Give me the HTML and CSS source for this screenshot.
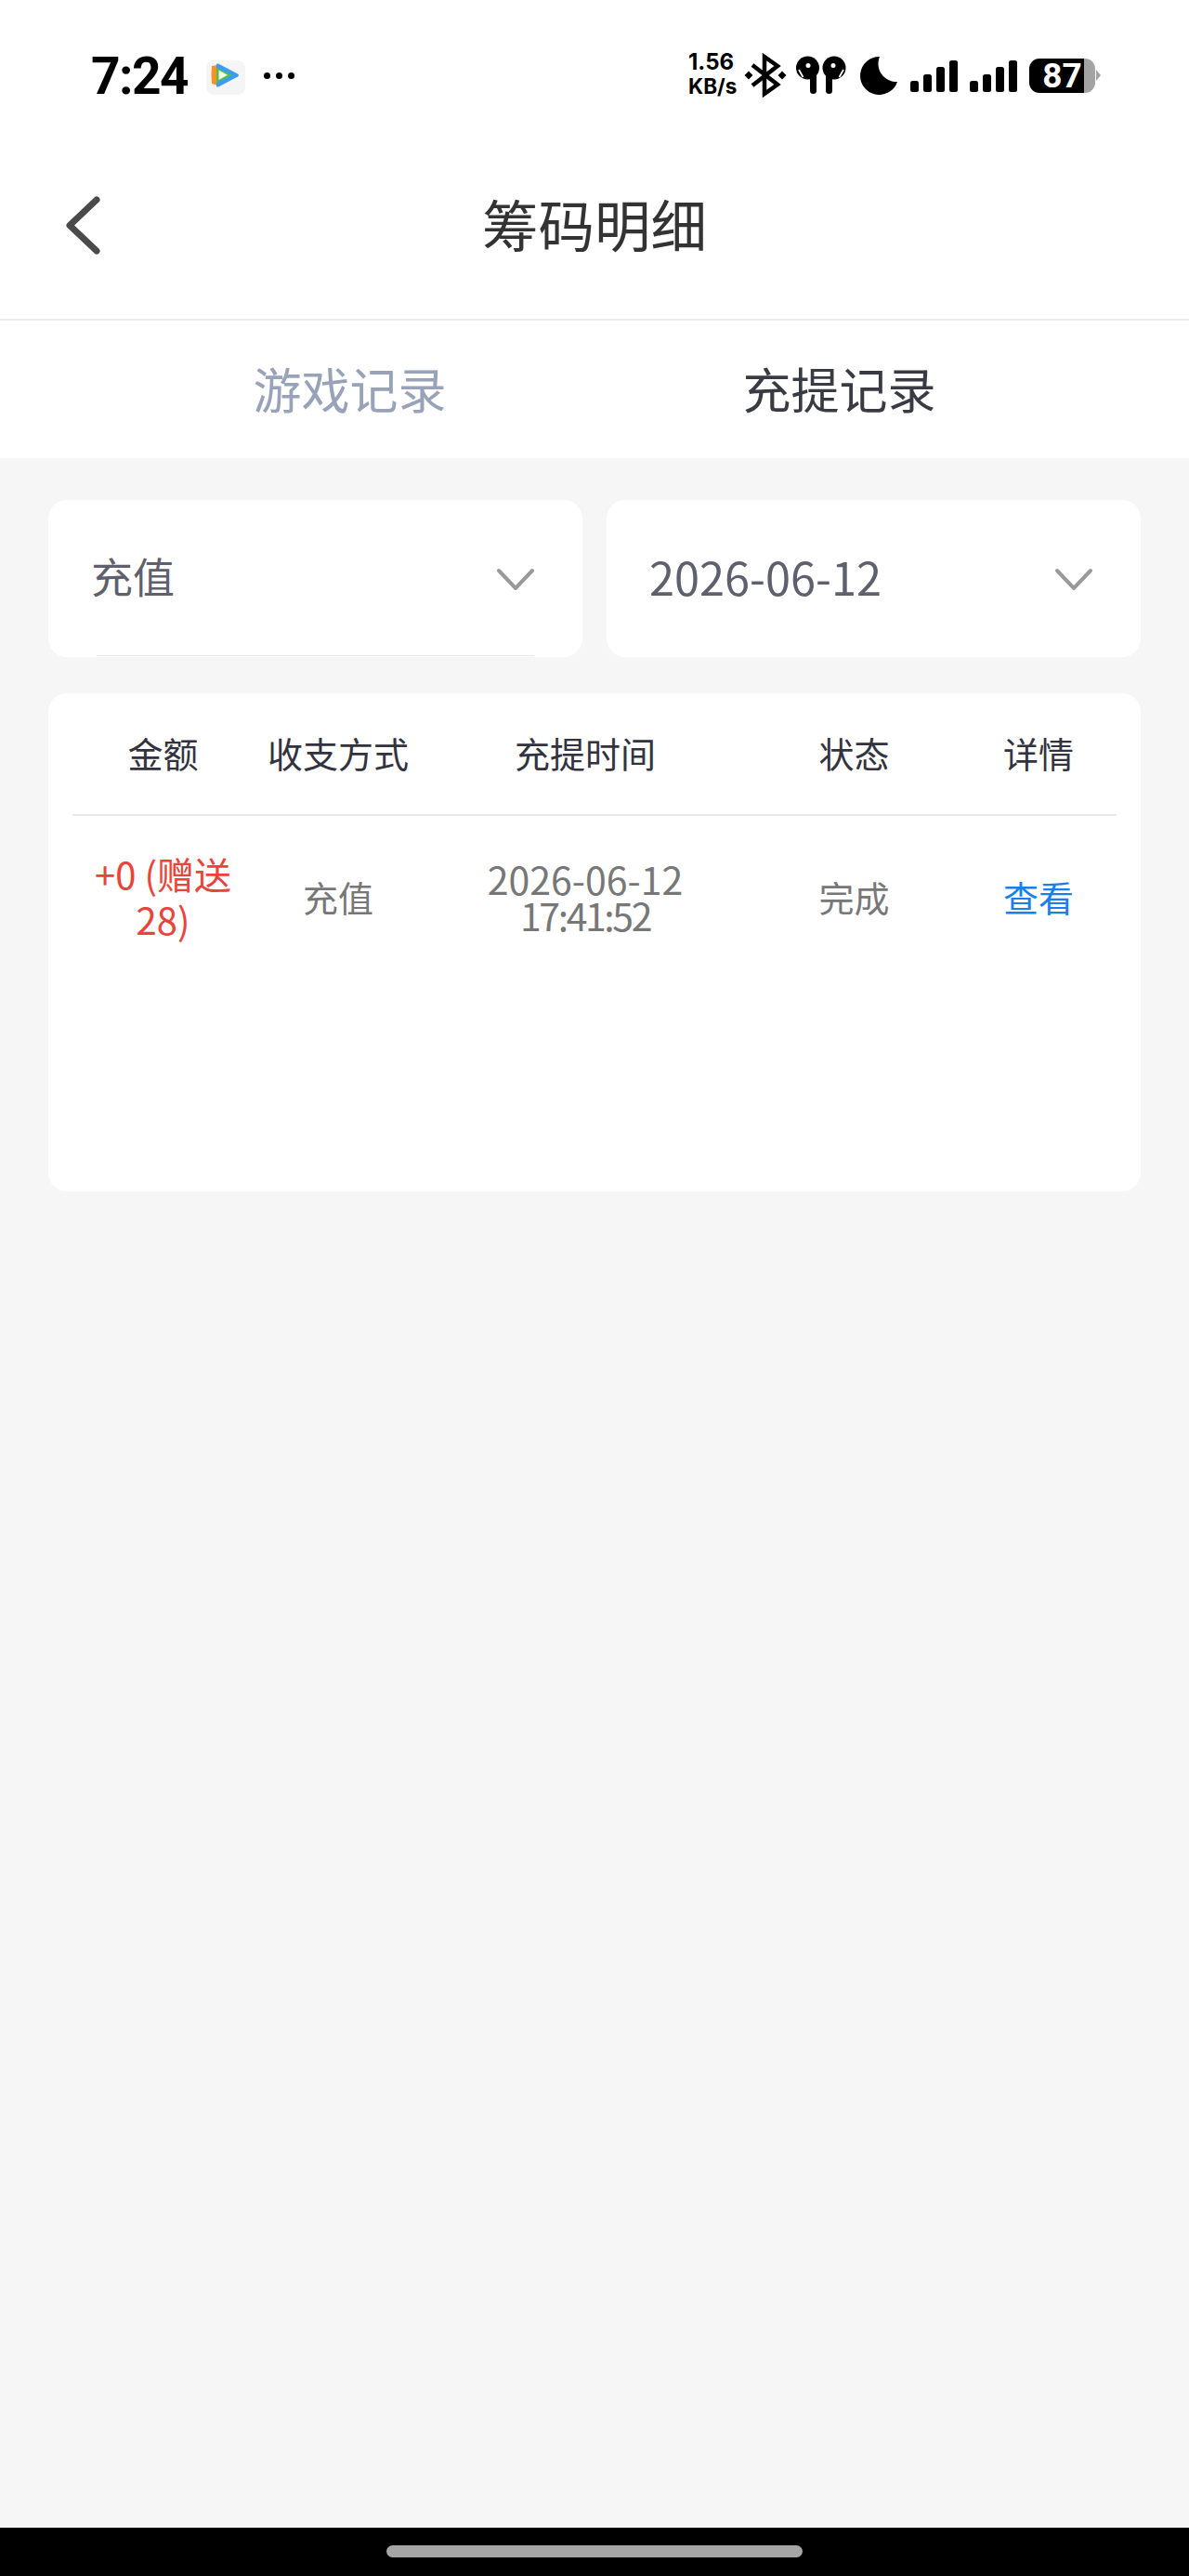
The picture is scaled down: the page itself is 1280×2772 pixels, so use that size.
FILE: index.html
```html
<!DOCTYPE html>
<html lang="zh-CN">
<head>
  <meta charset="UTF-8">
  <title>筹码明细</title>
  <link rel="stylesheet" href="styles.css">
</head>
<body>
  <div class="page">
    <div class="status-bar">
      <div class="status-left">
        <span class="clock">7:24</span>
        <svg class="app-icon" width="42" height="37" viewBox="0 0 42 37">
          <rect width="42" height="37" rx="8" fill="#f5f5f5"/>
          <path d="M6 6 L12 5 V27 L6 25 Q5 16 6 6 Z" fill="#f7931e"/>
          <path d="M11 4 Q12 3 14 4 L34 14.5 Q36 16 34 17.5 L14 28 Q12 29 11 28 Z" fill="#3b9cf0"/>
          <path d="M11 8 L28 16 L11 24 Z" fill="#4fc04f"/>
          <path d="M13.5 10.5 L23 15.7 L13.5 21 Z" fill="#f4f8e8"/>
        </svg>
        <div class="dots"><i></i><i></i><i></i></div>
      </div>
      <div class="status-right">
        <div class="speed"><span class="speed-num">1.56</span><span>KB/s</span></div>
        <svg class="ic-bt" width="44" height="46" viewBox="0 0 44 46">
          <path d="M8 12 L35 33 L21 43 V3 L35 13 L8 34" fill="none" stroke="#000" stroke-width="4.5" stroke-linejoin="miter"/>
          <path d="M4 18.5 L8.5 23 L4 27.5 L-0.500 23 Z M40 18.500 L44.500 23 L40 27.500 L35.500 23 Z" fill="#000"/>
        </svg>
        <svg class="ic-pods" width="56" height="42" viewBox="0 0 56 42">
          <circle cx="12.500" cy="13" r="12.500" fill="#000"/>
          <rect x="15" y="10" width="7" height="31" rx="3.500" fill="#000"/>
          <circle cx="13" cy="10.500" r="2.500" fill="#fff"/>
          <path d="M3 15 L7.500 23" stroke="#fff" stroke-width="1.800"/>
          <circle cx="41" cy="13" r="12.500" fill="#000"/>
          <rect x="32" y="10" width="7" height="31" rx="3.500" fill="#000"/>
          <circle cx="40" cy="10.500" r="2.500" fill="#fff"/>
          <path d="M51 15 L46.500 23" stroke="#fff" stroke-width="1.800"/>
        </svg>
        <svg class="ic-moon" width="42" height="42" viewBox="0 0 42 42">
          <path d="M22 1 A20.500 20.500 0 1 0 41 28 A19.500 19.500 0 0 1 22 1 Z" fill="#000"/>
        </svg>
        <svg class="ic-signal" width="51" height="34" viewBox="0 0 51 34">
          <rect x="0" y="22" width="9" height="12" rx="2.500"/>
          <rect x="14" y="15" width="9" height="19" rx="2.500"/>
          <rect x="28" y="7" width="9" height="27" rx="2.500"/>
          <rect x="42" y="0" width="9" height="34" rx="2.500"/>
        </svg>
        <svg class="ic-signal" width="51" height="34" viewBox="0 0 51 34">
          <rect x="0" y="22" width="9" height="12" rx="2.500"/>
          <rect x="14" y="15" width="9" height="19" rx="2.500"/>
          <rect x="28" y="7" width="9" height="27" rx="2.500"/>
          <rect x="42" y="0" width="9" height="34" rx="2.500"/>
        </svg>
        <div class="battery"><span class="battery-num">87</span></div>
        <div class="battery-nub"></div>
      </div>
    </div>

    <div class="nav-bar">
      <svg class="back" width="40" height="66" viewBox="0 0 40 66">
        <path d="M35 6 L6 33.500 L35 61" fill="none" stroke="#4a4a4a" stroke-width="7" stroke-linecap="round" stroke-linejoin="round"/>
      </svg>
      <h1 class="title">筹码明细</h1>
    </div>

    <div class="tabs">
      <div class="tab">游戏记录</div>
      <div class="tab active">充提记录</div>
    </div>

    <div class="content">
      <div class="filters">
        <div class="select select-open">
          <span>充值</span>
          <svg width="40" height="24" viewBox="0 0 40 24"><path d="M2 3 L20 22 L38 3" fill="none" stroke="#999" stroke-width="4" stroke-linecap="round"/></svg>
        </div>
        <div class="select">
          <span class="select-date">2026-06-12</span>
          <svg width="40" height="24" viewBox="0 0 40 24"><path d="M2 3 L20 22 L38 3" fill="none" stroke="#999" stroke-width="4" stroke-linecap="round"/></svg>
        </div>
      </div>

      <div class="records">
        <div class="row head">
          <div>金额</div>
          <div>收支方式</div>
          <div>充提时间</div>
          <div>状态</div>
          <div>详情</div>
        </div>
        <div class="row item">
          <div class="amount">+0 (赠送28)</div>
          <div>充值</div>
          <div class="time">2026-06-12 <span class="time-clock">17:41:52</span></div>
          <div>完成</div>
          <div class="link">查看</div>
        </div>
      </div>
    </div>

    <div class="home-bar"><div class="home-pill"></div></div>
  </div>
</body>
</html>
```
FILE: styles.css
```css
* {
  box-sizing: border-box;
}

body {
  margin: 0;
  font-family: "Noto Sans CJK SC", "Noto Sans", sans-serif;
  background-color: #f6f6f6;
}

.page {
  display: flex;
  flex-direction: column;
  height: 2772px;
}

/* status bar */
.status-bar {
  display: flex;
  justify-content: space-between;
  align-items: flex-start;
  height: 142px;
  padding: 58px 95px 0 98px;
  background-color: #fff;
}

.status-left, .status-right {
  display: flex;
  align-items: center;
  height: 46px;
}

.clock {
  font-family: Roboto, sans-serif;
  font-weight: 700;
  font-size: 55px;
  letter-spacing: -1.5px;
  line-height: 46px;
  color: #000;
  margin-top: 2px;
}

.app-icon {
  margin-left: 20px;
  margin-top: 4px;
}

.dots {
  display: flex;
  gap: 6px;
  margin-left: 20px;
}

.dots i {
  width: 7px;
  height: 7px;
  border-radius: 50%;
  background-color: #000;
}

.speed {
  display: flex;
  flex-direction: column;
  width: 51px;
  margin-top: -2px;
  font-family: Inter, sans-serif;
  font-weight: 700;
  font-size: 22.5px;
  line-height: 26px;
  color: #000;
  white-space: nowrap;
}

.speed-num {
  font-size: 24px;
}

.ic-bt {
  margin-left: 10px;
  overflow: visible;
}

.ic-pods {
  margin-left: 11px;
}

.ic-moon {
  margin-left: 12px;
}

.ic-signal {
  margin-left: 13px;
  margin-top: 1px;
}

.battery {
  display: flex;
  align-items: center;
  justify-content: center;
  width: 71px;
  height: 37px;
  margin-left: 13px;
  border-radius: 11px;
  background: linear-gradient(90deg, #000 59px, #a3a3a3 59px);
}

.battery-num {
  font-family: Roboto, sans-serif;
  font-weight: 700;
  font-size: 37px;
  line-height: 37px;
  color: #fff;
}

.battery-nub {
  width: 0;
  height: 0;
  margin-left: 1px;
  border-top: 6px solid transparent;
  border-bottom: 6px solid transparent;
  border-left: 5px solid #a3a3a3;
}

/* nav */
.nav-bar {
  position: relative;
  display: flex;
  align-items: center;
  justify-content: center;
  height: 203px;
  background-color: #fff;
  border-bottom: 2px solid #ececec;
}

.back {
  position: absolute;
  left: 69px;
  top: 67px;
}

.title {
  margin: 0;
  padding-bottom: 6px;
  font-size: 60.5px;
  font-weight: 400;
  color: #333;
  line-height: 80px;
}

.tabs {
  display: grid;
  grid-template-columns: 1fr 1fr;
  height: 148px;
  padding: 0 113px 3px;
  background-color: #fff;
}

.tab {
  display: flex;
  align-items: center;
  justify-content: center;
  font-size: 52px;
  color: #98a2b8;
}

.tab.active {
  color: #3a3a44;
}

/* filters */
.content {
  flex: 1;
  padding: 45px 52px 0;
}

.filters {
  display: flex;
  gap: 26px;
}

.select {
  position: relative;
  display: flex;
  flex: 1;
  align-items: center;
  justify-content: space-between;
  height: 169px;
  padding: 0 52px 0 46px;
  border-radius: 20px;
  background-color: #fff;
  font-size: 45px;
  color: #5f5f6d;
}

.select span {
  padding-bottom: 6px;
}

.select .select-date {
  font-size: 48.7px;
}

.select-open::after {
  content: "";
  position: absolute;
  left: 52px;
  right: 52px;
  bottom: 1px;
  height: 1px;
  background-color: #eaeaea;
}

/* table */
.records {
  height: 536px;
  margin-top: 39px;
  padding: 0 26px;
  border-radius: 20px;
  background-color: #fff;
}

.row {
  display: grid;
  grid-template-columns: 195px 182px 350px 229px 168px;
  align-items: center;
  text-align: center;
  font-size: 38px;
}

.head {
  height: 132px;
  padding-bottom: 3px;
  border-bottom: 2px solid #e9e9ed;
  color: #333340;
}

.item {
  height: 173px;
  color: #777;
}

.amount {
  padding: 0 20px;
  font-size: 40px;
  line-height: 49px;
  color: #e8443a;
}

.time {
  padding: 0 60px;
  font-size: 41px;
  line-height: 39px;
}

.time-clock {
  letter-spacing: -2.4px;
}

.link {
  color: #1a7fe8;
}

/* bottom bar */
.home-bar {
  display: flex;
  align-items: flex-start;
  justify-content: center;
  height: 52px;
  padding-top: 19px;
  background-color: #000;
}

.home-pill {
  width: 448px;
  height: 13px;
  border-radius: 7px;
  background-color: #a5a5a5;
}
```
